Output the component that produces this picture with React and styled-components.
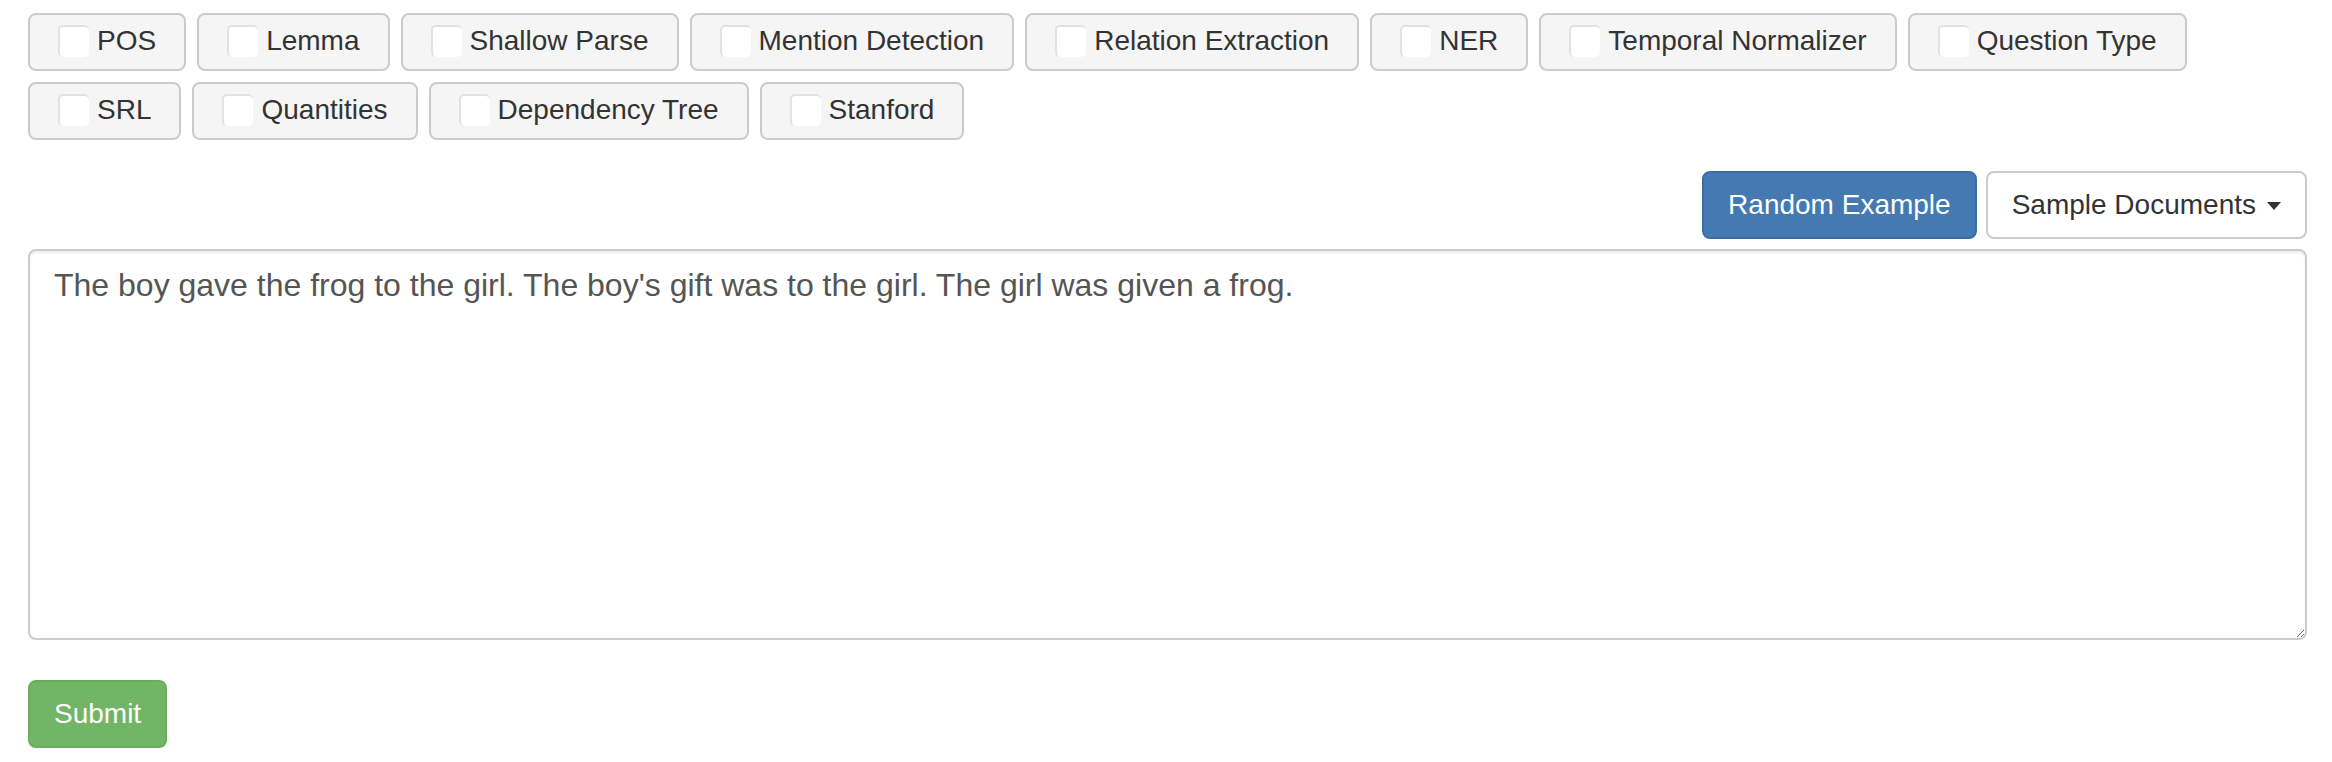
import React from "react";
import styled, { createGlobalStyle } from "styled-components";

const GlobalStyle = createGlobalStyle`
  body {
    margin: 0;
    background: #fff;
    font-family: "Liberation Sans", Arial, sans-serif;
    color: #333;
  }
`;

const row1 = ["POS", "Lemma", "Shallow Parse", "Mention Detection", "Relation Extraction", "NER", "Temporal Normalizer", "Question Type"];
const row2 = ["SRL", "Quantities", "Dependency Tree", "Stanford"];

const Page = styled.div`
  padding: 13px 25px 0 28px;
  display: flex;
  flex-direction: column;
`;

const ViewRow = styled.div`
  display: flex;
  gap: 11px;
  margin-bottom: ${(p) => p.$last ? "31px" : "11px"};
`;

const ViewButton = styled.label`
  box-sizing: border-box;
  height: 58px;
  display: flex;
  align-items: center;
  gap: 8px;
  padding: 0 28px 2px 28px;
  background: #f5f5f5;
  border: 2px solid #cbcbcb;
  border-radius: 8px;
  font-size: 28px;
  color: #333;
  cursor: pointer;
`;

const Check = styled.span`
  box-sizing: border-box;
  width: 31px;
  height: 32px;
  background: #fff;
  border-top: 2px solid #e2e2e2;
  border-left: 2px solid #e2e2e2;
  border-radius: 5px;
`;

const Toolbar = styled.div`
  display: flex;
  justify-content: flex-end;
  gap: 9px;
  margin-bottom: 10px;
`;

const Button = styled.button`
  box-sizing: border-box;
  height: 68px;
  padding: 0 24px;
  font-family: "Liberation Sans", Arial, sans-serif;
  font-size: 28px;
  border-radius: 8px;
  border: 2px solid ${(p) => p.$border};
  background: ${(p) => p.$bg};
  color: ${(p) => p.$color};
  display: flex;
  align-items: center;
  gap: 11px;
  cursor: pointer;
`;

const Caret = styled.span`
  width: 0;
  height: 0;
  border-top: 8px solid #333;
  border-left: 7px solid transparent;
  border-right: 7px solid transparent;
  margin-top: 2px;
`;

const TextArea = styled.textarea`
  box-sizing: border-box;
  width: 100%;
  height: 391px;
  padding: 12px 24px;
  font-family: "Liberation Sans", Arial, sans-serif;
  font-size: 32px;
  line-height: 1.42857;
  color: #555;
  border: 2px solid #ccc;
  border-radius: 8px;
  box-shadow: inset 0 2px 2px rgba(0, 0, 0, 0.075);
  outline: none;
  resize: vertical;
  margin: 0 0 40px;
  display: block;
`;

const SubmitRow = styled.div`
  display: flex;
`;

export default function App() {
  return (
    <>
      <GlobalStyle />
      <Page>
        <ViewRow>
          {row1.map((v) => (
            <ViewButton key={v}>
              <Check />
              {v}
            </ViewButton>
          ))}
        </ViewRow>
        <ViewRow $last>
          {row2.map((v) => (
            <ViewButton key={v}>
              <Check />
              {v}
            </ViewButton>
          ))}
        </ViewRow>
        <Toolbar>
          <Button $bg="#4479b1" $border="#3d6ea3" $color="#fff">Random Example</Button>
          <Button $bg="#fff" $border="#ccc" $color="#333">
            Sample Documents <Caret />
          </Button>
        </Toolbar>
        <TextArea
          defaultValue="The boy gave the frog to the girl. The boy's gift was to the girl. The girl was given a frog."
        />
        <SubmitRow>
          <Button $bg="#73b566" $border="#69ad5b" $color="#fff">Submit</Button>
        </SubmitRow>
      </Page>
    </>
  );
}
